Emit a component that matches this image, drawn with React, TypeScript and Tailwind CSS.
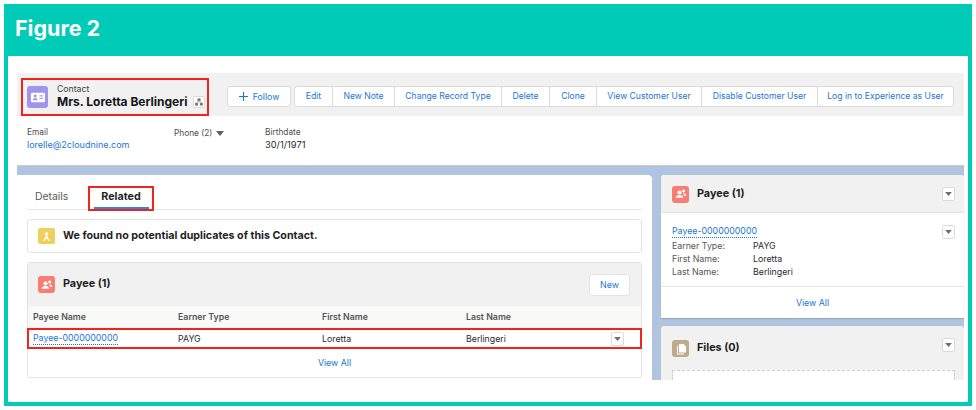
const actions = [
  { label: 'Edit', width: 'w-[37px]' },
  { label: 'New Note', width: 'w-[62px]' },
  { label: 'Change Record Type', width: 'w-[107px]' },
  { label: 'Delete', width: 'w-[48px]' },
  { label: 'Clone', width: 'w-[47px]' },
  { label: 'View Customer User', width: 'w-[105px]' },
  { label: 'Disable Customer User', width: 'w-[116px]' },
  { label: 'Log in to Experience as User', width: 'w-[136px]' },
];

const columns = ['Payee Name', 'Earner Type', 'First Name', 'Last Name'];

const details = [
  { label: 'Earner Type:', value: 'PAYG' },
  { label: 'First Name:', value: 'Loretta' },
  { label: 'Last Name:', value: 'Berlingeri' },
];

function Caret() {
  return (
    <svg viewBox="0 0 10 6" className="w-[7px] h-[4px] fill-[#706e6b]">
      <path d="M0 0h10L5 6z" />
    </svg>
  );
}

function MenuButton() {
  return (
    <div className="w-[13px] h-[14px] shrink-0 flex items-center justify-center bg-white border border-[#dddbda] rounded-[2px]">
      <Caret />
    </div>
  );
}

function PayeeIcon() {
  return (
    <div className="w-[17px] h-[17px] shrink-0 rounded-[3px] bg-[#f77e75] flex items-center justify-center">
      <svg viewBox="0 0 16 16" className="w-[12px] h-[12px] fill-white">
        <circle cx="6" cy="6" r="2.8" />
        <path d="M1 13c0-2.4 2.2-3.6 5-3.6s5 1.2 5 3.6z" />
        <circle cx="11.5" cy="4" r="2" />
        <path d="M10.5 7.4c2.4-.3 4.5.6 4.5 2.8h-3c-.3-1-.8-1.7-1.5-2.8z" />
      </svg>
    </div>
  );
}

export default function App() {
  return (
    <div className="w-[976px] h-[410px] bg-white p-[4px] font-['Inter',sans-serif] overflow-hidden">
      <div className="w-[968px] h-[402px] bg-[#00cbb7] flex flex-col">
        <div className="h-[52px] pl-[11px] pt-[9px] text-[21.5px] leading-[30px] font-bold text-white">Figure 2</div>

        <div className="mx-[4px] h-[346px] bg-white pt-[17px] pl-[9px] pr-[4px] flex flex-col">
          {/* record header */}
          <div className="h-[43px] bg-[#f1f1f1] pl-[4px] pt-[5px] flex items-start">
            <div className="w-[188px] h-[38px] border-2 border-[#f0241c] pl-[4px] flex items-center">
              <div className="w-[21px] h-[22px] shrink-0 rounded-[3px] bg-[#a094ed] flex items-center justify-center">
                <svg viewBox="0 0 16 12" className="w-[14px] h-[11px]">
                  <rect x="0" y="0.5" width="16" height="11" rx="1.5" fill="#fff" />
                  <circle cx="4.8" cy="4.4" r="1.7" fill="#a094ed" />
                  <path d="M2 9c0-1.6 1.2-2.4 2.8-2.4S7.6 7.400 7.600 9z" fill="#a094ed" />
                  <rect x="9.500" y="3.500" width="4.500" height="1.200" fill="#a094ed" />
                  <rect x="9.500" y="6.300" width="4.500" height="1.200" fill="#a094ed" />
                </svg>
              </div>
              <div className="ml-[9px] -mt-[3px] flex flex-col">
                <span className="text-[8.7px] leading-[11px] text-[#3e3e3c]">Contact</span>
                <div className="flex items-center h-[13px]">
                  <span className="text-[12px] leading-[13px] font-bold text-[#16161a] whitespace-nowrap">Mrs. Loretta Berlingeri</span>
                  <div className="ml-[6px] mt-[2px] w-[12px] h-[12px] bg-white border border-[#dddbda] rounded-[2px] flex items-center justify-center">
                    <svg viewBox="0 0 10 10" className="w-[8px] h-[8px] fill-[#706e6b] stroke-[#706e6b] stroke-[0.6]">
                      <rect x="3.500" y="1" width="3" height="2.500" />
                      <path d="M5 3.500V5M2 6.500V5h6v1.500" fill="none" />
                      <rect x="0.500" y="6.500" width="3" height="2.500" />
                      <rect x="6.500" y="6.500" width="3" height="2.500" />
                    </svg>
                  </div>
                </div>
              </div>
            </div>

            <div className="ml-[18px] mt-[8px] w-[64px] h-[21px] bg-white border border-[#dddbda] rounded-[3px] flex items-center justify-center gap-[5px] text-[8.8px] text-[#1b76d3]">
              <svg viewBox="0 0 10 10" className="w-[9px] h-[9px] stroke-[#1b76d3] stroke-[1.200]">
                <path d="M5 0v10M0 5h10" />
              </svg>
              Follow
            </div>
            <div className="ml-[3px] mt-[8px] h-[21px] flex bg-white border border-[#dddbda] rounded-[3px]">
              {actions.map((action, i) => (
                <div
                  key={action.label}
                  className={`${action.width} flex items-center justify-center text-[8.6px] whitespace-nowrap text-[#1b76d3] ${i > 0 ? 'border-l border-[#dddbda]' : ''}`}
                >
                  {action.label}
                </div>
              ))}
            </div>
          </div>

          {/* highlights */}
          <div className="h-[49px] pl-[10px] pt-[10px] flex bg-white">
            <div className="w-[147px]">
              <div className="text-[8.3px] leading-[12px] text-[#4f4f4f]">Email</div>
              <div className="text-[9px] leading-[13px] text-[#1b76d3]">lorelle@2cloudnine.com</div>
            </div>
            <div className="w-[91px] pt-[1px] flex items-start gap-[4px]">
              <span className="text-[8.3px] leading-[12px] text-[#4f4f4f]">Phone (2)</span>
              <div className="pt-[4px]"><svg viewBox="0 0 10 6" className="w-[8px] h-[5px] fill-[#5f5f5f]"><path d="M0 0h10L5 6z" /></svg></div>
            </div>
            <div>
              <div className="text-[8.3px] leading-[12px] text-[#4f4f4f]">Birthdate</div>
              <div className="text-[9.3px] leading-[13px] text-[#2b2b2b]">30/1/1971</div>
            </div>
          </div>

          {/* page body */}
          <div className="h-[215px] flex flex-col bg-[#b0c4e0] border-t border-[#c9ccd2]">
            <div className="h-[9px] shrink-0" />
            <div className="flex-1 min-h-0 flex gap-[9px]">
              {/* left column */}
              <div className="w-[635px] bg-white rounded-tr-[4px] px-[10px] flex flex-col">
                <div className="h-[35px] shrink-0 border-b border-[#e8e8e8] flex items-end">
                  <div className="w-[61px] h-[24px] flex items-center pl-[8px] text-[10.4px] text-[#5a5a5a]">Details</div>
                  <div className="w-[66px] h-[25px] -mb-[2px] border-2 border-[#f0241c] flex flex-col items-center">
                    <div className="h-[19px] flex items-center text-[10.7px] font-bold text-[#1f1f1f]">Related</div>
                    <div className="w-[55px] h-[2px] bg-[#2f86ea]" />
                  </div>
                </div>

                <div className="mt-[9px] h-[34px] shrink-0 border border-[#e3e3e3] rounded-[3px] flex items-center pl-[10px]">
                  <div className="w-[17px] h-[16px] rounded-[2px] bg-[#f1cf5d] flex items-center justify-center">
                    <svg viewBox="0 0 12 12" className="w-[11px] h-[11px] fill-white">
                      <path d="M6 0.500 8.500 3.500H7V6l3 5H8.500L6 7.500 3.500 11H2l3-5V3.500H3.500z" />
                    </svg>
                  </div>
                  <span className="ml-[8px] text-[10.7px] font-bold text-[#1f1f1f]">We found no potential duplicates of this Contact.</span>
                </div>

                <div className="mt-[9px] h-[116px] shrink-0 border border-[#e3e3e3] rounded-[3px] flex flex-col">
                  <div className="h-[43px] bg-[#f1f1f1] pl-[10px] pr-[11px] flex items-center">
                    <PayeeIcon />
                    <span className="ml-[8px] text-[10.8px] font-bold text-[#1f1f1f]">Payee (1)</span>
                    <div className="ml-auto w-[41px] h-[22px] bg-white border border-[#e3e3e3] rounded-[3px] flex items-center justify-center text-[8.8px] text-[#1b76d3]">New</div>
                  </div>
                  <div className="h-[22px] bg-[#f9f9f8] grid grid-cols-[145px_144px_144px_1fr] pl-[5px] items-center text-[8.8px] font-semibold text-[#565656]">
                    {columns.map((c) => (
                      <div key={c}>{c}</div>
                    ))}
                  </div>
                  <div className="-mx-px h-[21px] border-2 border-[#f0241c] grid grid-cols-[145px_144px_144px_1fr] pl-[4px] pr-[16px] items-center text-[8.8px] text-[#2b2b2b]">
                    <div className="text-[#1b76d3] w-fit border-b border-dotted border-[#1b76d3] leading-[12px]">Payee-0000000000</div>
                    <div>PAYG</div>
                    <div>Loretta</div>
                    <div className="flex items-center justify-between">
                      Berlingeri
                      <MenuButton />
                    </div>
                  </div>
                  <div className="flex-1 flex items-center justify-center text-[8.8px] text-[#1b76d3]">View All</div>
                </div>
              </div>

              {/* right column */}
              <div className="w-[303px] flex flex-col gap-[8px]">
                <div className="h-[143px] shrink-0 bg-white rounded-t-[3px] flex flex-col shadow-[0_1px_1px_rgba(90,100,130,0.35)]">
                  <div className="h-[38px] bg-[#f1f1f1] border-b border-[#e3e3e3] pl-[11px] pr-[9px] pt-[1px] flex items-center rounded-t-[3px]">
                    <PayeeIcon />
                    <span className="ml-[8px] text-[10.8px] font-bold text-[#1f1f1f]">Payee (1)</span>
                    <div className="ml-auto"><MenuButton /></div>
                  </div>
                  <div className="h-[74px] pl-[11px] pr-[9px] pt-[12px] border-b border-[#e3e3e3]">
                    <div className="flex justify-between items-start">
                      <span className="text-[#1b76d3] text-[8.8px] leading-[12px] border-b border-dotted border-[#1b76d3]">Payee-0000000000</span>
                      <MenuButton />
                    </div>
                    {details.map((row) => (
                      <div key={row.label} className="flex h-[13px] items-center text-[8.8px]">
                        <span className="w-[81px] text-[#565656]">{row.label}</span>
                        <span className="text-[#2b2b2b]">{row.value}</span>
                      </div>
                    ))}
                  </div>
                  <div className="flex-1 flex items-center justify-center text-[8.8px] text-[#1b76d3]">View All</div>
                </div>

                <div className="flex-1 min-h-0 bg-[#f1f1f1] rounded-t-[3px] pl-[11px] pr-[9px] flex flex-col">
                  <div className="h-[44px] shrink-0 pt-[1px] flex items-center">
                    <div className="w-[17px] h-[17px] rounded-[3px] bg-[#bfab8c] flex items-center justify-center">
                      <svg viewBox="0 0 12 12" className="w-[12px] h-[12px] fill-white">
                        <path d="M4 1h4.500L11 3.500V9.500H4z" />
                        <path d="M2 3h1v7.500h6v1H2z" />
                      </svg>
                    </div>
                    <span className="ml-[8px] text-[10.8px] font-bold text-[#1f1f1f]">Files (0)</span>
                    <div className="ml-auto -mt-[8px]"><MenuButton /></div>
                  </div>
                  <div className="flex-1 bg-white border border-b-0 border-dashed border-[#cfcfcf]" />
                </div>
              </div>
            </div>
          </div>
        </div>
      </div>
    </div>
  );
}
